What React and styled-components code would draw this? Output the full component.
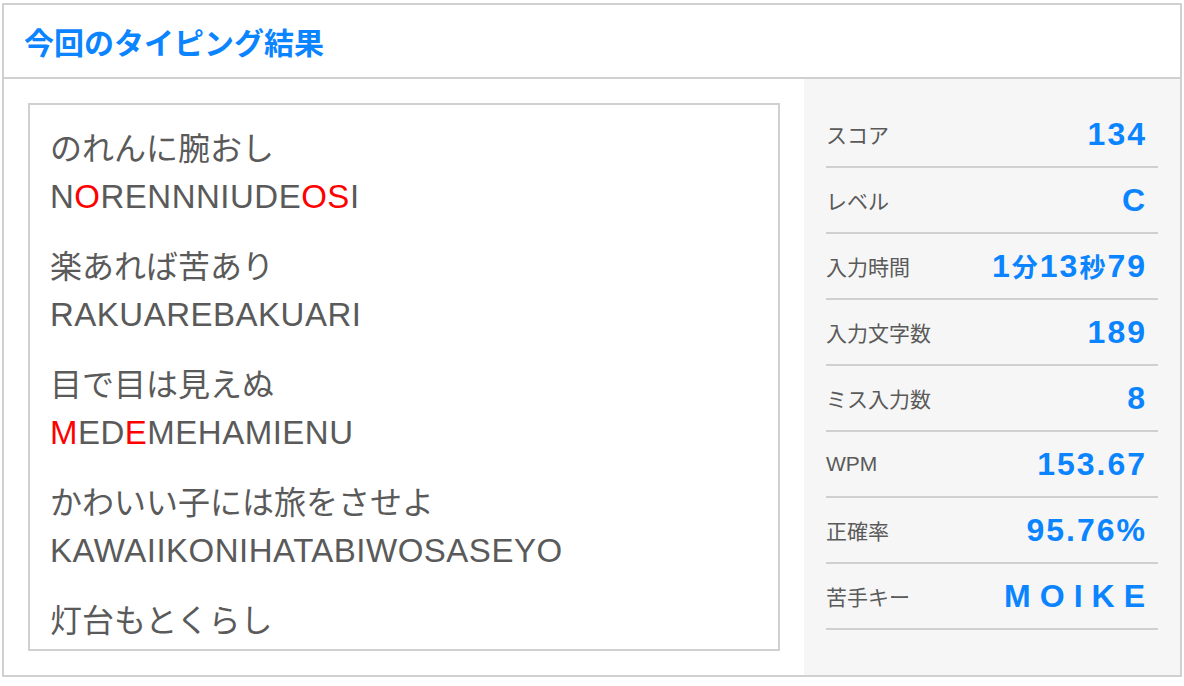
import React from "react";
import styled, { createGlobalStyle } from "styled-components";

const GlobalStyle = createGlobalStyle`
  * {
    box-sizing: border-box;
  }

  body {
    margin: 0;
    background-color: #ffffff;
    font-family: "Liberation Sans", "Noto Sans CJK JP", sans-serif;
  }
`;

const Page = styled.div`
  padding: 3px 2px;
`;

const Card = styled.section`
  border: 2px solid #d0d0d0;
  background-color: #ffffff;
`;

const Header = styled.header`
  height: 74px;
  display: flex;
  align-items: center;
  padding: 0 20px;
  border-bottom: 2px solid #d0d0d0;
`;

const Title = styled.h2`
  margin: 0;
  font-family: "Noto Sans CJK JP", sans-serif;
  font-size: 30px;
  font-weight: 700;
  color: #0a84ff;
`;

const Body = styled.div`
  display: flex;
  height: 596px;
`;

const TextColumn = styled.div`
  width: 800px;
  padding: 24px;
`;

const TextBox = styled.div`
  height: 100%;
  border: 2px solid #d0d0d0;
  padding: 21px 20px 0;
  overflow: hidden;
`;

const Phrase = styled.div`
  margin-bottom: 24px;
  color: #5a5a5a;
`;

const Kana = styled.p`
  margin: 0;
  font-size: 32px;
  line-height: 47px;
  white-space: nowrap;
`;

const Roman = styled.p`
  margin: 0;
  font-size: 33px;
  line-height: 47px;
  letter-spacing: 0.5px;
  white-space: nowrap;
`;

const Miss = styled.span`
  color: #ff0000;
`;

const Stats = styled.aside`
  flex: 1;
  background-color: #f6f6f6;
  padding: 23px 22px 0;
`;

const StatRow = styled.div`
  height: 66px;
  display: flex;
  align-items: center;
  justify-content: space-between;
  padding-right: 13px;
  border-bottom: 2px solid #d0d0d0;
`;

const Label = styled.span`
  font-size: 21px;
  color: #5a5a5a;
`;

const Value = styled.span`
  font-family: "Liberation Sans", "Noto Sans CJK JP", sans-serif;
  font-size: 32px;
  font-weight: 700;
  color: #0a84ff;
  letter-spacing: ${(p) => (p.$wide ? "9px" : "2px")};
  margin-right: ${(p) => (p.$wide ? "-9px" : "-2px")};
  white-space: nowrap;
`;

const Unit = styled.span`
  font-family: "Noto Sans CJK JP", sans-serif;
  font-size: 26px;
`;

const phrases = [
  {
    kana: "のれんに腕おし",
    roman: [["N"], ["O", true], ["RENNNIUDE"], ["OS", true], ["I"]],
  },
  { kana: "楽あれば苦あり", roman: [["RAKUAREBAKUARI"]] },
  {
    kana: "目で目は見えぬ",
    roman: [["M", true], ["ED"], ["E", true], ["MEHAMIENU"]],
  },
  { kana: "かわいい子には旅をさせよ", roman: [["KAWAIIKONIHATABIWOSASEYO"]] },
  { kana: "灯台もとくらし" },
];

const stats = [
  { label: "スコア", value: "134" },
  { label: "レベル", value: "C" },
  {
    label: "入力時間",
    value: (
      <>
        1<Unit>分</Unit>13<Unit>秒</Unit>79
      </>
    ),
  },
  { label: "入力文字数", value: "189" },
  { label: "ミス入力数", value: "8" },
  { label: "WPM", value: "153.67" },
  { label: "正確率", value: "95.76%" },
  { label: "苦手キー", value: "MOIKE", wide: true },
];

const App = () => {
  return (
    <Page>
      <GlobalStyle />
      <Card>
        <Header>
          <Title>今回のタイピング結果</Title>
        </Header>

        <Body>
          <TextColumn>
            <TextBox>
              {phrases.map((item) => (
                <Phrase key={item.kana}>
                  <Kana>{item.kana}</Kana>
                  {item.roman && (
                    <Roman>
                      {item.roman.map(([text, miss], i) =>
                        miss ? <Miss key={i}>{text}</Miss> : <span key={i}>{text}</span>
                      )}
                    </Roman>
                  )}
                </Phrase>
              ))}
            </TextBox>
          </TextColumn>

          <Stats>
            {stats.map((s) => (
              <StatRow key={s.label}>
                <Label>{s.label}</Label>
                <Value $wide={s.wide}>{s.value}</Value>
              </StatRow>
            ))}
          </Stats>
        </Body>
      </Card>
    </Page>
  );
};

export default App;
